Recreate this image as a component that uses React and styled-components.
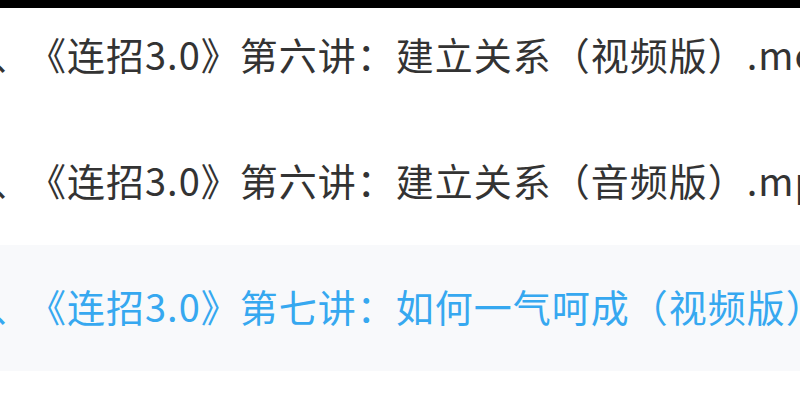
import React from "react";
import styled, { createGlobalStyle } from "styled-components";

const Global = createGlobalStyle`
  html, body { margin: 0; padding: 0; background: #ffffff; }
  body { font-family: "Noto Sans CJK SC", "Noto Sans", sans-serif; }
`;

const Page = styled.div`
  width: 800px;
  height: 400px;
  overflow: hidden;
  display: flex;
  flex-direction: column;
  background: #ffffff;
`;

const TopBar = styled.div`
  height: 8px;
  flex: none;
  background: #000000;
`;

const List = styled.ul`
  list-style: none;
  margin: 0;
  padding: 0;
  display: flex;
  flex-direction: column;
`;

const Row = styled.li`
  box-sizing: border-box;
  flex: none;
  height: ${(p) => (p.$cut ? "111px" : "126px")};
  padding-bottom: ${(p) => (p.$cut ? "19px" : "4px")};
  display: flex;
  align-items: center;
  overflow: hidden;
  white-space: nowrap;
  font-size: 38px;
  line-height: 1;
  color: ${(p) => (p.$active ? "#36a8f0" : "#333333")};
  background: ${(p) => (p.$active ? "#f8f9fb" : "#ffffff")};
`;

const Index = styled.span`
  flex: none;
  margin-left: -8px;
`;

const Title = styled.span`
  flex: none;
  margin-left: -2px;
  letter-spacing: 1px;
`;

const items = [
  { title: "《连招3.0》第六讲：建立关系（视频版）.mov", cut: true },
  { title: "《连招3.0》第六讲：建立关系（音频版）.mp3" },
  { title: "《连招3.0》第七讲：如何一气呵成（视频版）.mov", active: true },
  { title: "" },
];

export default function App() {
  return (
    <Page>
      <Global />
      <TopBar />
      <List>
        {items.map((it, i) => (
          <Row key={i} $cut={it.cut} $active={it.active}>
            {it.title && <Index>、</Index>}
            {it.title && <Title>{it.title}</Title>}
          </Row>
        ))}
      </List>
    </Page>
  );
}
